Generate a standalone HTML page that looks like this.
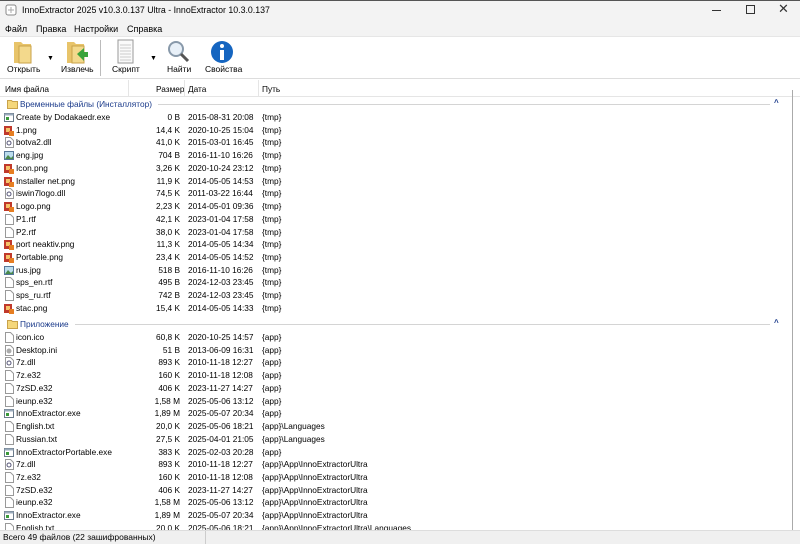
<!DOCTYPE html>
<html><head><meta charset="utf-8"><style>
*{margin:0;padding:0;box-sizing:border-box}
body{width:800px;height:544px;overflow:hidden;background:#fff;font-family:"Liberation Sans","DejaVu Sans",sans-serif;position:relative;color:#000}
.a{position:absolute;white-space:nowrap}
.t{font-size:8.3px}
.ico{position:absolute;width:10px;height:11px}
</style></head><body>
<div class="a" style="left:0;top:0;width:800px;height:22px;background:#f3f3f3;border-top:1px solid #555"></div>
<svg class="a" style="left:5px;top:4px" width="12" height="12"><rect x="1" y="1" width="10" height="10" rx="2" fill="#fff" stroke="#888"/><path d="M3 6h6M6 3v6" stroke="#aaa"/></svg>
<div class="a" style="left:22px;top:5px;font-size:8.8px">InnoExtractor 2025 v10.3.0.137 Ultra - InnoExtractor 10.3.0.137</div>
<div class="a" style="left:712px;top:10px;width:9px;height:1px;background:#333"></div>
<div class="a" style="left:746px;top:5px;width:9px;height:9px;border:1px solid #333"></div>
<div class="a" style="left:778px;top:1px;font-size:13px;color:#333">✕</div>
<div class="a" style="left:0;top:22px;width:800px;height:14px;background:#f3f3f3"></div>
<div class="a" style="left:5px;top:24px;font-size:9px">Файл</div>
<div class="a" style="left:36px;top:24px;font-size:9px">Правка</div>
<div class="a" style="left:74px;top:24px;font-size:9px">Настройки</div>
<div class="a" style="left:127px;top:24px;font-size:9px">Справка</div>
<div class="a" style="left:0;top:36px;width:800px;height:43px;background:#fff;border-top:1px solid #e6e6e6;border-bottom:1px solid #ddd"></div>
<svg class="a" style="left:12px;top:39px" width="24" height="26"><path d="M2 3h7l2 2h8v19H2z" fill="#e8c46a"/><path d="M7 7h12v17H7z" fill="#f3d98c" stroke="#c9a24a"/></svg>
<div class="a" style="left:47px;top:55px;font-size:7px">▼</div>
<div class="a" style="left:7px;top:64px;font-size:8.5px">Открыть</div>
<svg class="a" style="left:65px;top:39px" width="26" height="26"><path d="M2 3h7l2 2h8v19H2z" fill="#e8c46a"/><path d="M7 7h12v17H7z" fill="#f3d98c" stroke="#c9a24a"/><path d="M12 15l7-6v4h4v5h-4v4z" fill="#3aa33a"/></svg>
<div class="a" style="left:61px;top:64px;font-size:8.5px">Извлечь</div>
<div class="a" style="left:100px;top:40px;width:1px;height:36px;background:#bbb"></div>
<svg class="a" style="left:116px;top:39px" width="20" height="26"><rect x="2" y="1" width="15" height="23" fill="#fafafa" stroke="#999"/><path d="M4 6h11M4 9h11M4 12h11M4 15h11M4 18h11M4 21h11" stroke="#ccc"/></svg>
<div class="a" style="left:150px;top:55px;font-size:7px">▼</div>
<div class="a" style="left:112px;top:64px;font-size:8.5px">Скрипт</div>
<svg class="a" style="left:167px;top:40px" width="24" height="24"><circle cx="9" cy="9" r="7" fill="#e8f0f8" stroke="#8899aa" stroke-width="2"/><path d="M14 14l7 7" stroke="#555" stroke-width="3"/></svg>
<div class="a" style="left:167px;top:64px;font-size:8.5px">Найти</div>
<svg class="a" style="left:210px;top:40px" width="24" height="24"><circle cx="12" cy="12" r="11" fill="#1565c0"/><circle cx="12" cy="6" r="2" fill="#fff"/><rect x="10" y="10" width="4" height="10" fill="#fff"/></svg>
<div class="a" style="left:205px;top:64px;font-size:8.5px">Свойства</div>
<div class="a" style="left:0;top:80px;width:800px;height:17px;border-bottom:1px solid #e5e5e5"></div>
<div class="a t" style="left:5px;top:84px">Имя файла</div>
<div class="a" style="left:128px;top:80px;width:1px;height:17px;background:#e5e5e5"></div>
<div class="a t" style="left:156px;top:84px">Размер</div>
<div class="a" style="left:184px;top:80px;width:1px;height:17px;background:#e5e5e5"></div>
<div class="a t" style="left:188px;top:84px">Дата</div>
<div class="a" style="left:258px;top:80px;width:1px;height:17px;background:#e5e5e5"></div>
<div class="a t" style="left:262px;top:84px">Путь</div>
<div class="a" style="left:792px;top:90px;width:1px;height:440px;background:#aaa"></div>
<div id="list"></div>
<div class="a" style="left:0;top:530px;width:800px;height:14px;background:#f0f0f0;border-top:1px solid #ddd"></div>
<div class="a" style="left:3px;top:532px;font-size:8.5px">Всего 49 файлов (22 зашифрованных)</div>
<div class="a" style="left:205px;top:531px;width:1px;height:13px;background:#ccc"></div>
<script>
const G=[['Временные файлы (Инсталлятор)',104,158,[
['e','Create by Dodakaedr.exe','0 B','2015-08-31 20:08','{tmp}'],
['p','1.png','14,4 K','2020-10-25 15:04','{tmp}'],
['d','botva2.dll','41,0 K','2015-03-01 16:45','{tmp}'],
['j','eng.jpg','704 B','2016-11-10 16:26','{tmp}'],
['p','Icon.png','3,26 K','2020-10-24 23:12','{tmp}'],
['p','Installer net.png','11,9 K','2014-05-05 14:53','{tmp}'],
['d','iswin7logo.dll','74,5 K','2011-03-22 16:44','{tmp}'],
['p','Logo.png','2,23 K','2014-05-01 09:36','{tmp}'],
['f','P1.rtf','42,1 K','2023-01-04 17:58','{tmp}'],
['f','P2.rtf','38,0 K','2023-01-04 17:58','{tmp}'],
['p','port neaktiv.png','11,3 K','2014-05-05 14:34','{tmp}'],
['p','Portable.png','23,4 K','2014-05-05 14:52','{tmp}'],
['j','rus.jpg','518 B','2016-11-10 16:26','{tmp}'],
['f','sps_en.rtf','495 B','2024-12-03 23:45','{tmp}'],
['f','sps_ru.rtf','742 B','2024-12-03 23:45','{tmp}'],
['p','stac.png','15,4 K','2014-05-05 14:33','{tmp}']]],
['Приложение',324,75,[
['f','icon.ico','60,8 K','2020-10-25 14:57','{app}'],
['g','Desktop.ini','51 B','2013-06-09 16:31','{app}'],
['d','7z.dll','893 K','2010-11-18 12:27','{app}'],
['f','7z.e32','160 K','2010-11-18 12:08','{app}'],
['f','7zSD.e32','406 K','2023-11-27 14:27','{app}'],
['f','ieunp.e32','1,58 M','2025-05-06 13:12','{app}'],
['e','InnoExtractor.exe','1,89 M','2025-05-07 20:34','{app}'],
['f','English.txt','20,0 K','2025-05-06 18:21','{app}\\Languages'],
['f','Russian.txt','27,5 K','2025-04-01 21:05','{app}\\Languages'],
['e','InnoExtractorPortable.exe','383 K','2025-02-03 20:28','{app}'],
['d','7z.dll','893 K','2010-11-18 12:27','{app}\\App\\InnoExtractorUltra'],
['f','7z.e32','160 K','2010-11-18 12:08','{app}\\App\\InnoExtractorUltra'],
['f','7zSD.e32','406 K','2023-11-27 14:27','{app}\\App\\InnoExtractorUltra'],
['f','ieunp.e32','1,58 M','2025-05-06 13:12','{app}\\App\\InnoExtractorUltra'],
['e','InnoExtractor.exe','1,89 M','2025-05-07 20:34','{app}\\App\\InnoExtractorUltra'],
['f','English.txt','20,0 K','2025-05-06 18:21','{app}\\App\\InnoExtractorUltra\\Languages']]]];
const I={
e:'<rect x="0.5" y="1.5" width="9" height="8" fill="#fff" stroke="#6a7a8a"/><rect x="0.5" y="1.5" width="9" height="2" fill="#9ab"/><rect x="2" y="5" width="3" height="3" fill="#3a9a3a"/>',
p:'<rect x="0" y="1" width="8" height="9" fill="#c0392b"/><rect x="2" y="3" width="4" height="4" fill="#f5c36a"/><rect x="5" y="6" width="5" height="5" fill="#e67e22"/>',
d:'<path d="M1.5 .5h5l3 3v7h-8z" fill="#fff" stroke="#999"/><circle cx="5" cy="6" r="2" fill="none" stroke="#557"/>',
j:'<rect x="0.5" y="1.5" width="9" height="8" fill="#bde" stroke="#579"/><path d="M1 9l3-4 3 3 2-2v3z" fill="#4a8a4a"/>',
f:'<path d="M1.5 .5h5l3 3v7h-8z" fill="#fff" stroke="#999"/>',
g:'<path d="M1.5 .5h5l3 3v7h-8z" fill="#fff" stroke="#999"/><circle cx="5" cy="6" r="2.5" fill="#aaa"/>'};
let h='';
for(const [name,y,lx,rows] of G){
h+=`<svg class="a" style="left:7px;top:${y-5}px" width="12" height="10"><path d="M.5 1.5h4l1 1h5v7h-10z" fill="#f5d77a" stroke="#c9a24a"/></svg>`;
h+=`<div class="a t" style="left:20px;top:${y-5}px;color:#1a3a8a">${name}</div>`;
h+=`<div class="a" style="left:${lx}px;top:${y}px;width:${770-lx}px;height:1px;background:#d4d4d4"></div>`;
h+=`<div class="a" style="left:774px;top:${y-6}px;font-size:8px;color:#1a3a8a;font-weight:bold">^</div>`;
rows.forEach((r,i)=>{const t=y+13+i*12.73;
h+=`<svg class="ico" style="left:4px;top:${t-5}px" viewBox="0 0 10 11">${I[r[0]]}</svg>`;
h+=`<div class="a t" style="left:16px;top:${t-5}px">${r[1]}</div>`;
h+=`<div class="a t" style="left:120px;width:60px;text-align:right;top:${t-5}px">${r[2]}</div>`;
h+=`<div class="a t" style="left:188px;top:${t-5}px">${r[3]}</div>`;
h+=`<div class="a t" style="left:262px;top:${t-5}px">${r[4]}</div>`;});}
document.getElementById('list').innerHTML=h;
</script>
</body></html>
